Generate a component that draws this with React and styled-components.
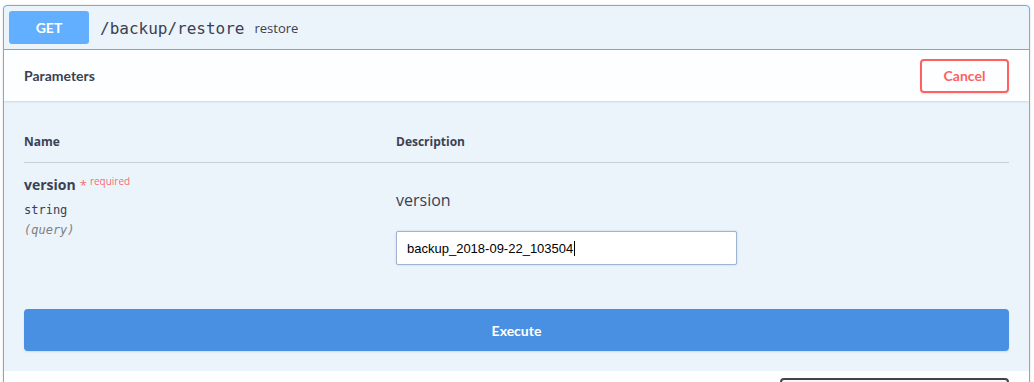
import React from "react";
import styled, { createGlobalStyle } from "styled-components";

const Global = createGlobalStyle`
  html, body { margin: 0; padding: 0; background: #fff; }
  body { font-family: "Open Sans", sans-serif; color: #3b4151; }
  * { box-sizing: border-box; }
`;

const Page = styled.div`
  width: 1034px;
  height: 382px;
  overflow: hidden;
  padding: 5px 4px 0 3px;
`;

const Card = styled.div`
  border: 1px solid #61affe;
  border-radius: 4px;
  background: #ebf3fb;
  overflow: hidden;
  box-shadow: 0 0 3px rgba(0, 0, 0, 0.12);
`;

const Summary = styled.div`
  display: flex;
  align-items: center;
  padding: 5px;
  border-bottom: 1px solid #61affe;
`;

const Method = styled.span`
  min-width: 80px;
  height: 33px;
  display: inline-flex;
  align-items: center;
  justify-content: center;
  border-radius: 3px;
  background: #61affe;
  color: #fff;
  font-family: Lato, sans-serif;
  font-weight: 700;
  font-size: 14px;
`;

const Path = styled.span`
  margin-left: 11px;
  font-family: "DejaVu Sans Mono", monospace;
  font-size: 16px;
  color: #3b4151;
  padding-top: 1px;
`;

const SummaryDesc = styled.span`
  margin-left: 10px;
  font-size: 13px;
  color: #3b4151;
`;

const SectionHeader = styled.div`
  display: flex;
  align-items: center;
  justify-content: space-between;
  min-height: 51px;
  padding: 8px 20px;
  background: rgba(255, 255, 255, 0.85);
  box-shadow: 0 1px 2px rgba(0, 0, 0, 0.12);
  position: relative;
`;

const SectionTitle = styled.h4`
  margin: 0;
  font-family: Lato, sans-serif;
  font-size: 14px;
  font-weight: 700;
  color: #3b4151;
`;

const CancelButton = styled.button`
  width: 89px;
  height: 34px;
  border: 2px solid #ff6060;
  border-radius: 4px;
  background: transparent;
  color: #ff6060;
  font-family: Lato, sans-serif;
  font-weight: 700;
  font-size: 14px;
  box-shadow: 0 1px 2px rgba(0, 0, 0, 0.1);
  padding: 0;
`;

const ParamsBody = styled.div`
  padding: 20px 20px 24px;
`;

const Grid = styled.div`
  display: grid;
  grid-template-columns: 372px 1fr;
`;

const HeadCell = styled.div`
  padding: 12px 0;
  font-size: 12px;
  font-weight: 700;
  line-height: 17px;
  color: #3b4151;
  border-bottom: 1px solid rgba(59, 65, 81, 0.2);
`;

const NameCell = styled.div`
  padding: 10px 0 0;
`;

const ParamName = styled.div`
  font-size: 14px;
  font-weight: 700;
  color: #3b4151;
  line-height: 24px;
`;

const Asterisk = styled.span`
  margin-left: 4px;
  font-size: 13px;
  font-weight: 400;
  color: rgba(255, 0, 0, 0.6);
`;

const Required = styled.span`
  position: relative;
  top: -5px;
  margin-left: 3px;
  font-size: 10px;
  font-weight: 400;
  color: rgba(255, 0, 0, 0.6);
`;

const Mono = styled.div`
  font-family: "DejaVu Sans Mono", monospace;
  font-size: 12px;
  line-height: 20px;
  color: ${(p) => (p.$muted ? "#808080" : "#3b4151")};
  font-style: ${(p) => (p.$muted ? "italic" : "normal")};
  margin-top: ${(p) => (p.$muted ? "0" : "2px")};
`;

const DescCell = styled.div`
  padding: 25px 0 0;
`;

const DescText = styled.p`
  margin: 0 0 19px;
  font-size: 16px;
  line-height: 24px;
  color: #3b4151;
`;

const Field = styled.div`
  width: 341px;
  height: 34px;
  display: flex;
  align-items: center;
  padding: 0 10px;
  background: #fff;
  border: 1px solid #9fb4d3;
  border-radius: 2px;
  box-shadow: 0 0 2px rgba(97, 140, 200, 0.35);
  font-family: "Liberation Sans", Arial, sans-serif;
  font-size: 13px;
  color: #000;
`;

const Caret = styled.span`
  display: inline-block;
  width: 1px;
  height: 15px;
  background: #000;
  margin-left: 1px;
`;

const ExecuteWrap = styled.div`
  padding: 20px;
`;

const ExecuteButton = styled.button`
  width: 100%;
  height: 42px;
  border: 2px solid #4990e2;
  border-radius: 4px;
  background: #4990e2;
  color: #fff;
  font-family: Lato, sans-serif;
  font-weight: 700;
  font-size: 14px;
  box-shadow: 0 1px 2px rgba(0, 0, 0, 0.1);
`;

const ResponsesHeader = styled.div`
  display: flex;
  justify-content: flex-end;
  padding: 7px 20px 0;
  height: 40px;
  background: rgba(255, 255, 255, 0.85);
`;

const ContentType = styled.div`
  width: 229px;
  height: 34px;
  border: 2px solid #41444e;
  border-radius: 4px;
  background: #f7f7f7;
`;

export default function App() {
  return (
    <>
      <Global />
      <Page>
        <Card>
          <Summary>
            <Method>GET</Method>
            <Path>/backup/restore</Path>
            <SummaryDesc>restore</SummaryDesc>
          </Summary>
          <SectionHeader>
            <SectionTitle>Parameters</SectionTitle>
            <CancelButton>Cancel</CancelButton>
          </SectionHeader>
          <ParamsBody>
            <Grid>
              <HeadCell>Name</HeadCell>
              <HeadCell>Description</HeadCell>
              <NameCell>
                <ParamName>
                  version<Asterisk>*</Asterisk>
                  <Required>required</Required>
                </ParamName>
                <Mono>string</Mono>
                <Mono $muted>(query)</Mono>
              </NameCell>
              <DescCell>
                <DescText>version</DescText>
                <Field>
                  backup_2018-09-22_103504
                  <Caret />
                </Field>
              </DescCell>
            </Grid>
          </ParamsBody>
          <ExecuteWrap>
            <ExecuteButton>Execute</ExecuteButton>
          </ExecuteWrap>
          <ResponsesHeader>
            <ContentType />
          </ResponsesHeader>
        </Card>
      </Page>
    </>
  );
}
